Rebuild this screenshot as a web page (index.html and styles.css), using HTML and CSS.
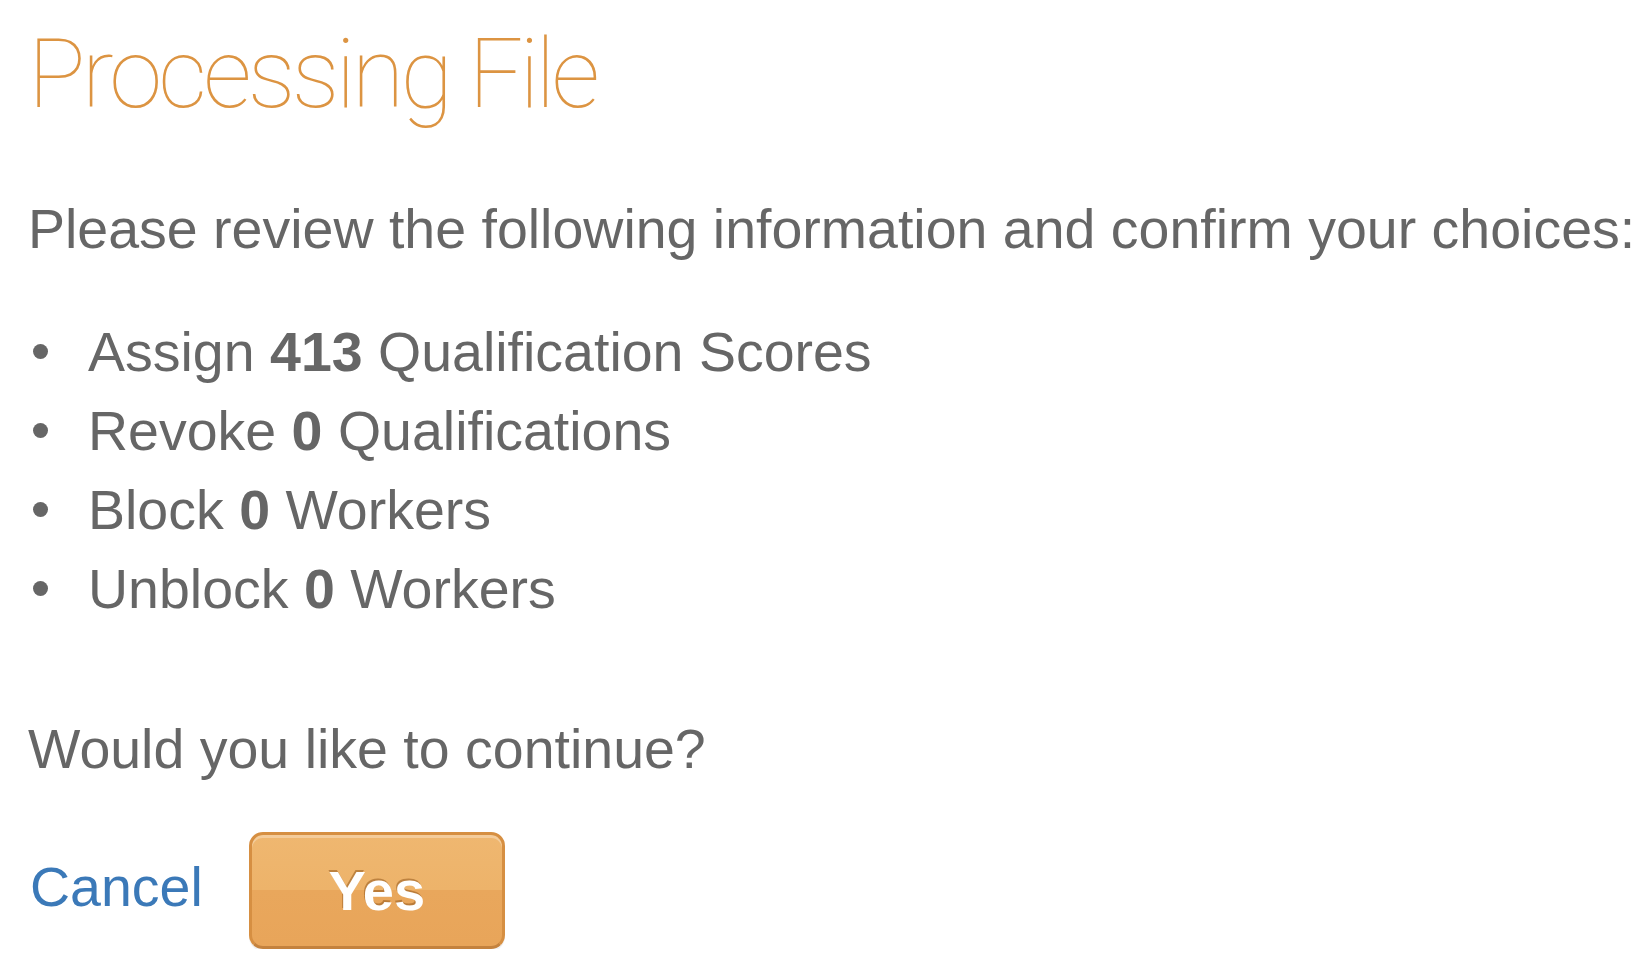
FILE: index.html
```html
<!DOCTYPE html>
<html lang="en">
<head>
    <meta charset="UTF-8">
    <meta name="viewport" content="width=device-width, initial-scale=1.0">
    <title>Processing File</title>

    <link rel="stylesheet" href="styles.css">

</head>
<body>
    <div class="main">
        <h1 class="title">Processing File</h1>

        <p class="intro">Please review the following information and confirm your choices:</p>

        <ul class="summary">
            <li>Assign <b>413</b> Qualification Scores</li>
            <li>Revoke <b>0</b> Qualifications</li>
            <li>Block <b>0</b> Workers</li>
            <li>Unblock <b>0</b> Workers</li>
        </ul>

        <p class="question">Would you like to continue?</p>

        <div class="actions">
            <a class="cancel" href="#">Cancel</a>
            <button class="yes">Yes</button>
        </div>
    </div>
</body>
</html>
```

FILE: styles.css
```css
* {
    margin: 0;
    padding: 0;
    list-style: none;
    box-sizing: border-box;
}
body{
    background-color: white;
    font-family: "Liberation Sans", Arial, sans-serif;
    font-size: 55.5px;
    color: rgb(102, 102, 102);
}
.main{
    padding-left: 28px;
}
.title{
    margin-top: 26px;
    font-family: Roboto, "Liberation Sans", sans-serif;
    font-weight: 100;
    font-size: 96px;
    line-height: 96px;
    letter-spacing: -3.8px;
    color: rgb(220, 148, 66);
}
.intro{
    margin-top: 68px;
    line-height: 79px;
}
.summary{
    margin-top: 44px;
}
.summary li{
    line-height: 79px;
}
.summary li::before{
    content: "";
    display: inline-block;
    width: 15px;
    height: 15px;
    border-radius: 50%;
    background-color: rgb(102, 102, 102);
    margin-left: 5px;
    margin-right: 40px;
    margin-bottom: 12px;
}
.question{
    margin-top: 81px;
    line-height: 79px;
}
.actions{
    display: flex;
    align-items: center;
    margin-top: 43px;
}
.cancel{
    color: rgb(59, 121, 184);
    text-decoration: none;
    padding-bottom: 8px;
    margin-left: 2px;
    margin-right: 46px;
}
.yes{
    width: 256px;
    height: 117px;
    border: 3px solid rgb(214, 143, 66);
    border-bottom-color: rgb(196, 130, 62);
    border-radius: 14px;
    background: linear-gradient(rgb(239, 183, 112), rgb(237, 179, 106) 50%, rgb(233, 167, 92) 50%, rgb(232, 165, 90));
    box-shadow: inset 0 3px 0 rgba(255, 255, 255, 0.3), 0 2px 0 rgba(0, 0, 0, 0.06);
    font-family: "Liberation Sans", Arial, sans-serif;
    font-weight: bold;
    font-size: 56px;
    color: white;
    text-shadow: -1px -2px 0 rgba(150, 90, 30, 0.55);
}
```
